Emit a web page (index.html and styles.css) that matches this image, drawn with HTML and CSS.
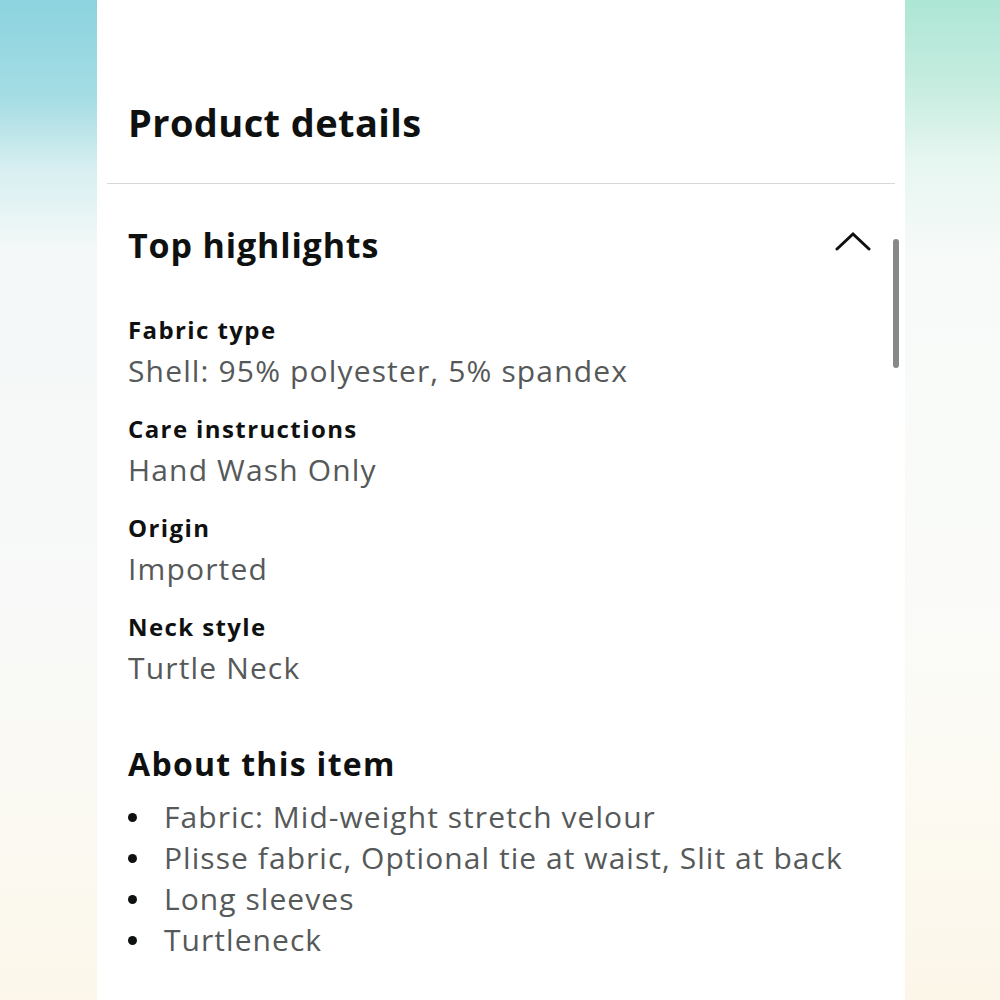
FILE: index.html
```html
<!DOCTYPE html>
<html lang="en">
<head>
<meta charset="utf-8">
<title>Product details</title>
<link rel="stylesheet" href="styles.css">
</head>
<body>
<div class="page">
  <div class="side side-left"></div>
  <main class="panel">
    <h1 class="title">Product details</h1>
    <hr class="divider">
    <section class="highlights">
      <div class="section-head">
        <h2 class="section-title">Top highlights</h2>
        <svg class="chevron" width="36" height="20" viewBox="0 0 36 20" aria-hidden="true">
          <path d="M2 18 L18 3 L34 18" fill="none" stroke="#0f1111" stroke-width="3" stroke-linecap="round" stroke-linejoin="miter"/>
        </svg>
      </div>
      <dl class="facts">
        <div class="fact">
          <dt class="fact-label">Fabric type</dt>
          <dd class="fact-value">Shell: 95% polyester, 5% spandex</dd>
        </div>
        <div class="fact">
          <dt class="fact-label">Care instructions</dt>
          <dd class="fact-value">Hand Wash Only</dd>
        </div>
        <div class="fact">
          <dt class="fact-label">Origin</dt>
          <dd class="fact-value">Imported</dd>
        </div>
        <div class="fact">
          <dt class="fact-label">Neck style</dt>
          <dd class="fact-value">Turtle Neck</dd>
        </div>
      </dl>
    </section>
    <section class="about">
      <h2 class="about-title">About this item</h2>
      <ul class="bullets">
        <li class="bullet">Fabric: Mid-weight stretch velour</li>
        <li class="bullet">Plisse fabric, Optional tie at waist, Slit at back</li>
        <li class="bullet">Long sleeves</li>
        <li class="bullet">Turtleneck</li>
      </ul>
    </section>
    <div class="scrollbar"></div>
  </main>
  <div class="side side-right"></div>
</div>
</body>
</html>
```

FILE: styles.css
```css
* { box-sizing: border-box; }
html, body { margin: 0; padding: 0; }
body {
  font-family: "Open Sans", "Noto Sans", sans-serif;
  color: #0f1111;
  background: #fff;
}
.page {
  display: flex;
  height: 1000px;
  overflow: hidden;
}
.side { flex: none; height: 100%; }
.side-left {
  width: 97px;
  background: linear-gradient(to bottom, #8bd3df 0%, #a6dde4 10%, #d8eff1 17%, #f4f8f8 25%, #f8f9f8 60%, #fbf9f1 85%, #fcf7ea 100%);
}
.side-right {
  width: 95px;
  background: linear-gradient(to bottom, #ade6d5 0%, #c4ecdf 8%, #e6f6f0 16%, #f7faf8 26%, #fafbf9 60%, #fcf9ef 85%, #fcf6e9 100%);
}
.panel {
  position: relative;
  flex: none;
  width: 808px;
  height: 100%;
  background: #fff;
  padding: 99px 0 0 0;
}
.title {
  margin: 0 0 0 31px;
  font-size: 38px;
  line-height: 46px;
  font-weight: 700;
  letter-spacing: 0.4px;
}
.divider {
  margin: 38px 10px 0 10px;
  border: 0;
  height: 1px;
  background: #d5d9d9;
}
.highlights { margin-top: 41px; padding: 0 36px 0 31px; }
.section-head {
  display: flex;
  justify-content: space-between;
  align-items: flex-start;
}
.section-title {
  margin: 0;
  font-size: 34px;
  line-height: 40px;
  font-weight: 700;
  letter-spacing: 0.85px;
}
.chevron { margin-top: 6px; margin-right: -2px; }
.facts { margin: 45px 0 0 0; display: flex; flex-direction: column; gap: 18px; }
.fact { display: flex; flex-direction: column; }
.fact-label {
  font-size: 24px;
  line-height: 40px;
  font-weight: 700;
  letter-spacing: 1.4px;
}
.fact-value {
  margin: 0;
  font-size: 30px;
  line-height: 41px;
  color: #565959;
  letter-spacing: 1.15px;
}
.about { margin-top: 56px; padding-left: 31px; }
.about-title {
  margin: 0;
  font-size: 32px;
  line-height: 40px;
  font-weight: 700;
  letter-spacing: 1.3px;
}
.bullets {
  list-style: none;
  margin: 12px 0 0 0;
  padding: 0;
}
.bullet {
  display: flex;
  align-items: center;
  font-size: 30px;
  line-height: 41px;
  color: #565959;
  letter-spacing: 1.05px;
}
.bullet::before {
  content: "";
  flex: none;
  width: 9px;
  height: 9px;
  border-radius: 50%;
  background: #0f1111;
  margin: 2px 27px 0 0;
}
.scrollbar {
  position: absolute;
  left: 796px;
  top: 239px;
  width: 6px;
  height: 129px;
  border-radius: 3px;
  background: #888;
}
```
